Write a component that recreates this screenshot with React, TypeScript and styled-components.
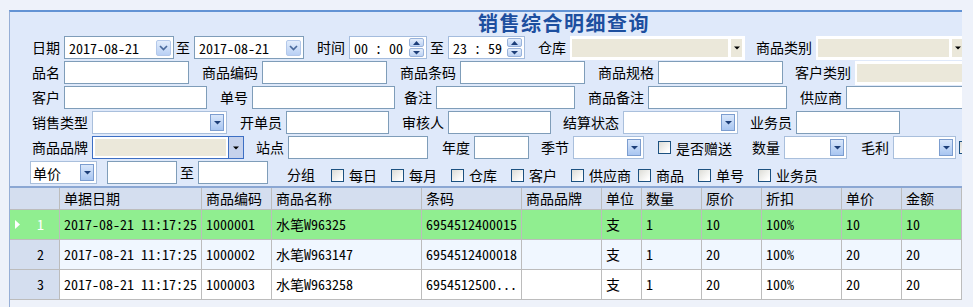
import React from "react";
import styled, { createGlobalStyle, css } from "styled-components";

const GlobalStyle = createGlobalStyle`
  html, body {
    margin: 0;
    padding: 0;
    background: #eef2fa;
  }
  body {
    font-family: "Noto Sans Mono CJK SC", "Noto Sans CJK SC", sans-serif;
    font-size: 14px;
    color: #000;
  }
  * {
    box-sizing: border-box;
  }
`;

type Sized = { $w?: number; $ml?: number };

const sized = css<Sized>`
  width: ${(p) => (p.$w ? `${p.$w}px` : "auto")};
  margin-left: ${(p) => p.$ml ?? 0}px;
  flex-shrink: 0;
`;

const Page = styled.div`
  width: 973px;
  height: 307px;
  padding: 10px 0 0 9px;
  overflow: hidden;
`;

const Frame = styled.div`
  width: 953px;
  height: 297px;
  border-left: 1px solid #97afd6;
  border-top: 2px solid #6393d4;
  background: #eef2fa;
  overflow-x: clip;
`;

const QueryPanel = styled.div`
  background: #dfe9fa;
  border-bottom: 2px solid #8ba7d3;
  overflow-x: clip;
`;

const Title = styled.div`
  height: 24px;
  padding-left: 468px;
  font-family: "Liberation Sans", "Noto Sans CJK SC", sans-serif;
  font-size: 20px;
  font-weight: bold;
  line-height: 24px;
  letter-spacing: 1.5px;
  color: #1d4f9f;
  white-space: nowrap;
`;

const Row = styled.div`
  display: flex;
  align-items: center;
  height: 25px;
  padding: 0 0 2px 22px;
  white-space: nowrap;
`;

const Label = styled.span<Sized>`
  ${sized};
  margin-right: 4px;
  line-height: 16px;
  padding-bottom: 2px;
`;

const TextBox = styled.div<Sized>`
  ${sized};
  height: 23px;
  background: #fff;
  border: 1px solid #7f9db9;
`;

const DateBox = styled(TextBox)`
  display: flex;
  align-items: center;
  justify-content: space-between;
  padding: 0 2px 0 4px;
  line-height: 16px;
`;

const DateBtn = styled.span`
  width: 15px;
  height: 16px;
  display: flex;
  align-items: center;
  justify-content: center;
  border: 1px solid #b3c8ea;
  border-radius: 2px;
  background: linear-gradient(#e2edfc, #b9d0f4);
`;

const Spinner = styled.div<Sized>`
  ${sized};
  height: 23px;
  display: flex;
  align-items: center;
  justify-content: space-between;
  padding: 1px 2px 1px 4px;
  background: #fff;
  border: 1px solid #a4bcdd;
  line-height: 16px;
`;

const SpinCol = styled.span`
  display: flex;
  flex-direction: column;
  gap: 1px;
`;

const SpinBtn = styled.span`
  width: 15px;
  height: 9px;
  display: flex;
  align-items: center;
  justify-content: center;
  border: 1px solid #9ab3da;
  border-radius: 2px;
  background: linear-gradient(#e4eefc, #bcd2f4);
`;

const Combo = styled.div<Sized>`
  ${sized};
  height: 23px;
  display: flex;
  align-items: center;
  justify-content: space-between;
  padding: 0 2px;
  background: #fff;
  border: 1px solid #a9bfdc;
  line-height: 16px;
`;

const ComboBtn = styled.span`
  width: 14px;
  height: 17px;
  margin-left: auto;
  display: flex;
  align-items: center;
  justify-content: center;
  border: 1px solid #7c9dcf;
  background: linear-gradient(#d9e7fb, #a9c6f1);
`;

const BeigeCombo = styled.div<Sized>`
  ${sized};
  height: 24px;
  display: flex;
  gap: 3px;
  padding: 3px 3px 3px 2px;
  background: #fff;
`;

const BeigeField = styled.span`
  flex: 1;
  background: #ebe8da;
`;

const BeigeBtn = styled.span`
  width: 11px;
  display: flex;
  align-items: center;
  justify-content: center;
  background: #ebe8da;
`;

const BrandCombo = styled.div<Sized>`
  ${sized};
  height: 23px;
  display: flex;
  border: 1px solid #3d6fc4;
  background: #fff;
`;

const BrandField = styled.span`
  flex: 1;
  margin: 2px;
  background: #ebe8da;
`;

const BrandBtn = styled.span`
  width: 15px;
  display: flex;
  align-items: center;
  justify-content: center;
  border-left: 1px solid #3d6fc4;
  background: #c6d2ec;
`;

const Check = styled.label<Sized>`
  ${sized};
  display: flex;
  align-items: center;
  gap: 5px;
  line-height: 16px;
`;

const Box = styled.span`
  width: 13px;
  height: 13px;
  flex-shrink: 0;
  border: 1px solid #1c5180;
  background: linear-gradient(135deg, #dcdcd6, #fff 85%);
`;

const GroupBar = styled.div<Sized>`
  ${sized};
  display: flex;
  align-items: center;
  padding-top: 5px;
`;

const COLUMNS = "50px 142px 70px 150px 100px 80px 40px 60px 60px 80px 60px 60px";

const Grid = styled.div`
  display: grid;
  grid-template-columns: ${COLUMNS};
`;

const HeadCell = styled.div`
  height: 22px;
  padding-left: 4px;
  line-height: 21px;
  background: #d4deef;
  border-right: 1px solid #bcbcbc;
  border-bottom: 1px solid #bcbcbc;
  white-space: nowrap;
  overflow: hidden;
`;

const Cell = styled.div<{ $bg: string }>`
  height: 30px;
  padding: 0 4px;
  line-height: 29px;
  background: ${(p) => p.$bg};
  border-right: 1px solid #bcbcbc;
  border-bottom: 1px solid #bcbcbc;
  white-space: nowrap;
  overflow: hidden;
`;

const RowHead = styled(Cell)<{ $active?: boolean }>`
  display: flex;
  align-items: center;
  justify-content: ${(p) => (p.$active ? "space-between" : "flex-end")};
  padding: 0 15px 0 5px;
  color: ${(p) => (p.$active ? "#fff" : "#000")};
`;

const Chevron = () => (
  <svg width="9" height="6" viewBox="0 0 9 6">
    <path d="M1 1 L4.5 4.5 L8 1" fill="none" stroke="#4a6a9c" strokeWidth="1.7" />
  </svg>
);

const NavyDown = () => (
  <svg width="7" height="5" viewBox="0 0 7 5">
    <path d="M0 1h7L3.5 4.5z" fill="#1d3e78" />
  </svg>
);

const BlackDown = () => (
  <svg width="6" height="4" viewBox="0 0 6 4">
    <path d="M0 0.5h6L3 3.5z" fill="#000" />
  </svg>
);

const SpinUp = () => (
  <svg width="7" height="4" viewBox="0 0 7 4">
    <path d="M0 4h7L3.5 0z" fill="#1d3e78" />
  </svg>
);

const RowArrow = () => (
  <svg width="5" height="9" viewBox="0 0 5 9">
    <path d="M0 0L5 4.5L0 9z" fill="#fff" />
  </svg>
);

const DateField = ({ w, ml, value }: { w: number; ml?: number; value: string }) => (
  <DateBox $w={w} $ml={ml}>
    <span>{value}</span>
    <DateBtn>
      <Chevron />
    </DateBtn>
  </DateBox>
);

const TimeField = ({ w, ml, value }: { w: number; ml?: number; value: string }) => (
  <Spinner $w={w} $ml={ml}>
    <span>{value}</span>
    <SpinCol>
      <SpinBtn>
        <SpinUp />
      </SpinBtn>
      <SpinBtn>
        <NavyDown />
      </SpinBtn>
    </SpinCol>
  </Spinner>
);

const Select = ({ w, ml, value }: { w: number; ml?: number; value?: string }) => (
  <Combo $w={w} $ml={ml}>
    {value && <span>{value}</span>}
    <ComboBtn>
      <NavyDown />
    </ComboBtn>
  </Combo>
);

const Disabled = ({ w, ml }: { w: number; ml?: number }) => (
  <BeigeCombo $w={w} $ml={ml}>
    <BeigeField />
    <BeigeBtn>
      <BlackDown />
    </BeigeBtn>
  </BeigeCombo>
);

const CheckBox = ({ text, w, ml }: { text: string; w?: number; ml?: number }) => (
  <Check $w={w} $ml={ml}>
    <Box />
    {text}
  </Check>
);

const headers = ["", "单据日期", "商品编码", "商品名称", "条码", "商品品牌", "单位", "数量", "原价", "折扣", "单价", "金额"];

const rows = [
  { n: 1, date: "2017-08-21 11:17:25", code: "1000001", name: "水笔W96325", bar: "6954512400015", price: "10", bg: "#90ee90" },
  { n: 2, date: "2017-08-21 11:17:25", code: "1000002", name: "水笔W963147", bar: "6954512400018", price: "20", bg: "#f0f7ff" },
  { n: 3, date: "2017-08-21 11:17:25", code: "1000003", name: "水笔W963258", bar: "6954512500...", price: "20", bg: "#ffffff" },
];

const groups: { text: string; w?: number }[] = [
  { text: "每日", w: 60 },
  { text: "每月", w: 60 },
  { text: "仓库", w: 60 },
  { text: "客户", w: 60 },
  { text: "供应商", w: 67 },
  { text: "商品", w: 60 },
  { text: "单号", w: 60 },
  { text: "业务员" },
];

export default function App() {
  return (
    <>
      <GlobalStyle />
      <Page>
        <Frame>
          <QueryPanel>
            <Title>销售综合明细查询</Title>
            <Row>
              <Label>日期</Label>
              <DateField w={110} value="2017-08-21" />
              <Label $ml={2}>至</Label>
              <DateField w={110} value="2017-08-21" />
              <Label $ml={13}>时间</Label>
              <TimeField w={78} value="00 : 00" />
              <Label $ml={3}>至</Label>
              <TimeField w={77} value="23 : 59" />
              <Label $ml={13}>仓库</Label>
              <Disabled w={175} />
              <Label $ml={11}>商品类别</Label>
              <Disabled w={150} />
            </Row>
            <Row>
              <Label>品名</Label>
              <TextBox $w={125} />
              <Label $ml={13}>商品编码</Label>
              <TextBox $w={125} />
              <Label $ml={13}>商品条码</Label>
              <TextBox $w={125} />
              <Label $ml={13}>商品规格</Label>
              <TextBox $w={125} />
              <Label $ml={12}>客户类别</Label>
              <Disabled w={130} />
            </Row>
            <Row>
              <Label>客户</Label>
              <TextBox $w={143} />
              <Label $ml={13}>单号</Label>
              <TextBox $w={143} />
              <Label $ml={9}>备注</Label>
              <TextBox $w={139} />
              <Label $ml={13}>商品备注</Label>
              <TextBox $w={139} />
              <Label $ml={13}>供应商</Label>
              <TextBox $w={130} />
            </Row>
            <Row>
              <Label>销售类型</Label>
              <Select w={135} />
              <Label $ml={13}>开单员</Label>
              <TextBox $w={103} />
              <Label $ml={13}>审核人</Label>
              <TextBox $w={103} />
              <Label $ml={12}>结算状态</Label>
              <Select w={115} />
              <Label $ml={12}>业务员</Label>
              <TextBox $w={104} />
            </Row>
            <Row>
              <Label>商品品牌</Label>
              <BrandCombo $w={152}>
                <BrandField />
                <BrandBtn>
                  <BlackDown />
                </BrandBtn>
              </BrandCombo>
              <Label $ml={12}>站点</Label>
              <TextBox $w={140} />
              <Label $ml={14}>年度</Label>
              <TextBox $w={55} />
              <Label $ml={12}>季节</Label>
              <Select w={71} />
              <CheckBox ml={14} text="是否赠送" />
              <Label $ml={20}>数量</Label>
              <Select w={63} />
              <Label $ml={14}>毛利</Label>
              <Select w={63} />
              <CheckBox ml={3} text="" />
            </Row>
            <Row>
              <Select ml={-2} w={67} value="单价" />
              <TextBox $ml={10} $w={70} />
              <Label $ml={3}>至</Label>
              <TextBox $w={70} />
              <GroupBar $ml={19}>
                <Label>分组</Label>
                {groups.map((g, i) => (
                  <CheckBox key={g.text} text={g.text} w={g.w} ml={i === 0 ? 12 : 0} />
                ))}
              </GroupBar>
            </Row>
          </QueryPanel>
          <Grid>
            {headers.map((h, i) => (
              <HeadCell key={i}>{h}</HeadCell>
            ))}
            {rows.map((r) => (
              <React.Fragment key={r.n}>
                <RowHead $bg={r.n === 1 ? "#90ee90" : "#d4deef"} $active={r.n === 1}>
                  {r.n === 1 && <RowArrow />}
                  <span>{r.n}</span>
                </RowHead>
                <Cell $bg={r.bg}>{r.date}</Cell>
                <Cell $bg={r.bg}>{r.code}</Cell>
                <Cell $bg={r.bg}>{r.name}</Cell>
                <Cell $bg={r.bg}>{r.bar}</Cell>
                <Cell $bg={r.bg} />
                <Cell $bg={r.bg}>支</Cell>
                <Cell $bg={r.bg}>1</Cell>
                <Cell $bg={r.bg}>{r.price}</Cell>
                <Cell $bg={r.bg}>100%</Cell>
                <Cell $bg={r.bg}>{r.price}</Cell>
                <Cell $bg={r.bg}>{r.price}</Cell>
              </React.Fragment>
            ))}
          </Grid>
        </Frame>
      </Page>
    </>
  );
}
